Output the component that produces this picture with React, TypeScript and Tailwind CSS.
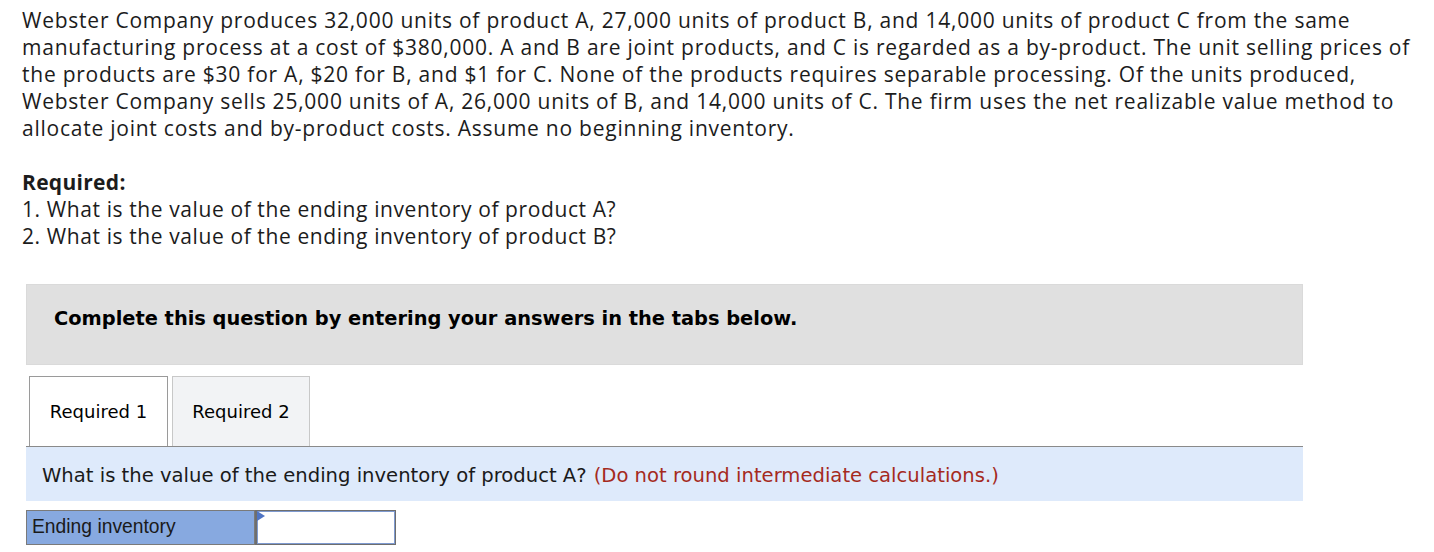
import React from 'react';

const introLines = [
  'Webster Company produces 32,000 units of product A, 27,000 units of product B, and 14,000 units of product C from the same',
  'manufacturing process at a cost of $380,000. A and B are joint products, and C is regarded as a by-product. The unit selling prices of',
  'the products are $30 for A, $20 for B, and $1 for C. None of the products requires separable processing. Of the units produced,',
  'Webster Company sells 25,000 units of A, 26,000 units of B, and 14,000 units of C. The firm uses the net realizable value method to',
  'allocate joint costs and by-product costs. Assume no beginning inventory.',
];

const App: React.FC = () => {
  return (
    <div className="w-[1434px] h-[552px] overflow-hidden bg-white text-[#1c1c1c]">
      <div className="pl-[22px] pt-[7px] font-['Open_Sans',sans-serif] text-[21px] leading-[27px] tracking-[0.76px] whitespace-nowrap">
        <p>
          {introLines.map((l) => (
            <span key={l} className="block">{l}</span>
          ))}
        </p>
        <div className="mt-[27px] tracking-[0.6px]">
          <p className="font-bold tracking-[0.3px]">Required:</p>
          <p>1. What is the value of the ending inventory of product A?</p>
          <p>2. What is the value of the ending inventory of product B?</p>
        </div>
      </div>

      <div className="ml-[26px] w-[1277px]">
        <div className="mt-[34px] h-[81px] bg-[#e0e0e0] border border-[#dadada] flex items-center pl-[27px] pb-[12px]">
          <span className="font-['DejaVu_Sans',sans-serif] font-bold text-[19.4px] text-black">
            Complete this question by entering your answers in the tabs below.
          </span>
        </div>

        <div className="mt-[11px] flex gap-[4px] pl-[3px] border-b border-[#8a8a8a] font-['DejaVu_Sans',sans-serif] text-[18px] text-black">
          <div className="w-[139px] h-[70px] bg-white border border-b-0 border-[#9a9a9a] flex items-center justify-center -mb-px">
            Required 1
          </div>
          <div className="w-[138px] h-[70px] bg-[#f2f3f5] border border-b-0 border-[#c8c8c8] flex items-center justify-center">
            Required 2
          </div>
        </div>

        <div className="h-[54px] bg-[#deeafb] flex items-center pl-[16px] pt-[3px] font-['DejaVu_Sans',sans-serif] text-[19.6px] text-[#1a1a1a]">
          <span>What is the value of the ending inventory of product A?</span>
          <span className="ml-[7px] text-[#a52a1e]">(Do not round intermediate calculations.)</span>
        </div>

        <div className="mt-[9px] flex h-[35px] font-['Liberation_Sans',sans-serif] text-[19.3px]">
          <div className="w-[229px] bg-[#87a9e0] border border-[#7a7a7a] flex items-center pl-[5px] text-[#1a1a1a]">
            Ending inventory
          </div>
          <div className="w-[141px] border border-[#6e6e6e] border-l-2">
            <div className="relative h-full bg-white border-[1.5px] border-[#7e9ad0]">
              <span className="absolute -left-[1px] -top-[1px] w-0 h-0 border-t-[5px] border-b-[5px] border-l-[8px] border-t-transparent border-b-transparent border-l-[#4f74c4]" />
            </div>
          </div>
        </div>
      </div>
    </div>
  );
};

export default App;
